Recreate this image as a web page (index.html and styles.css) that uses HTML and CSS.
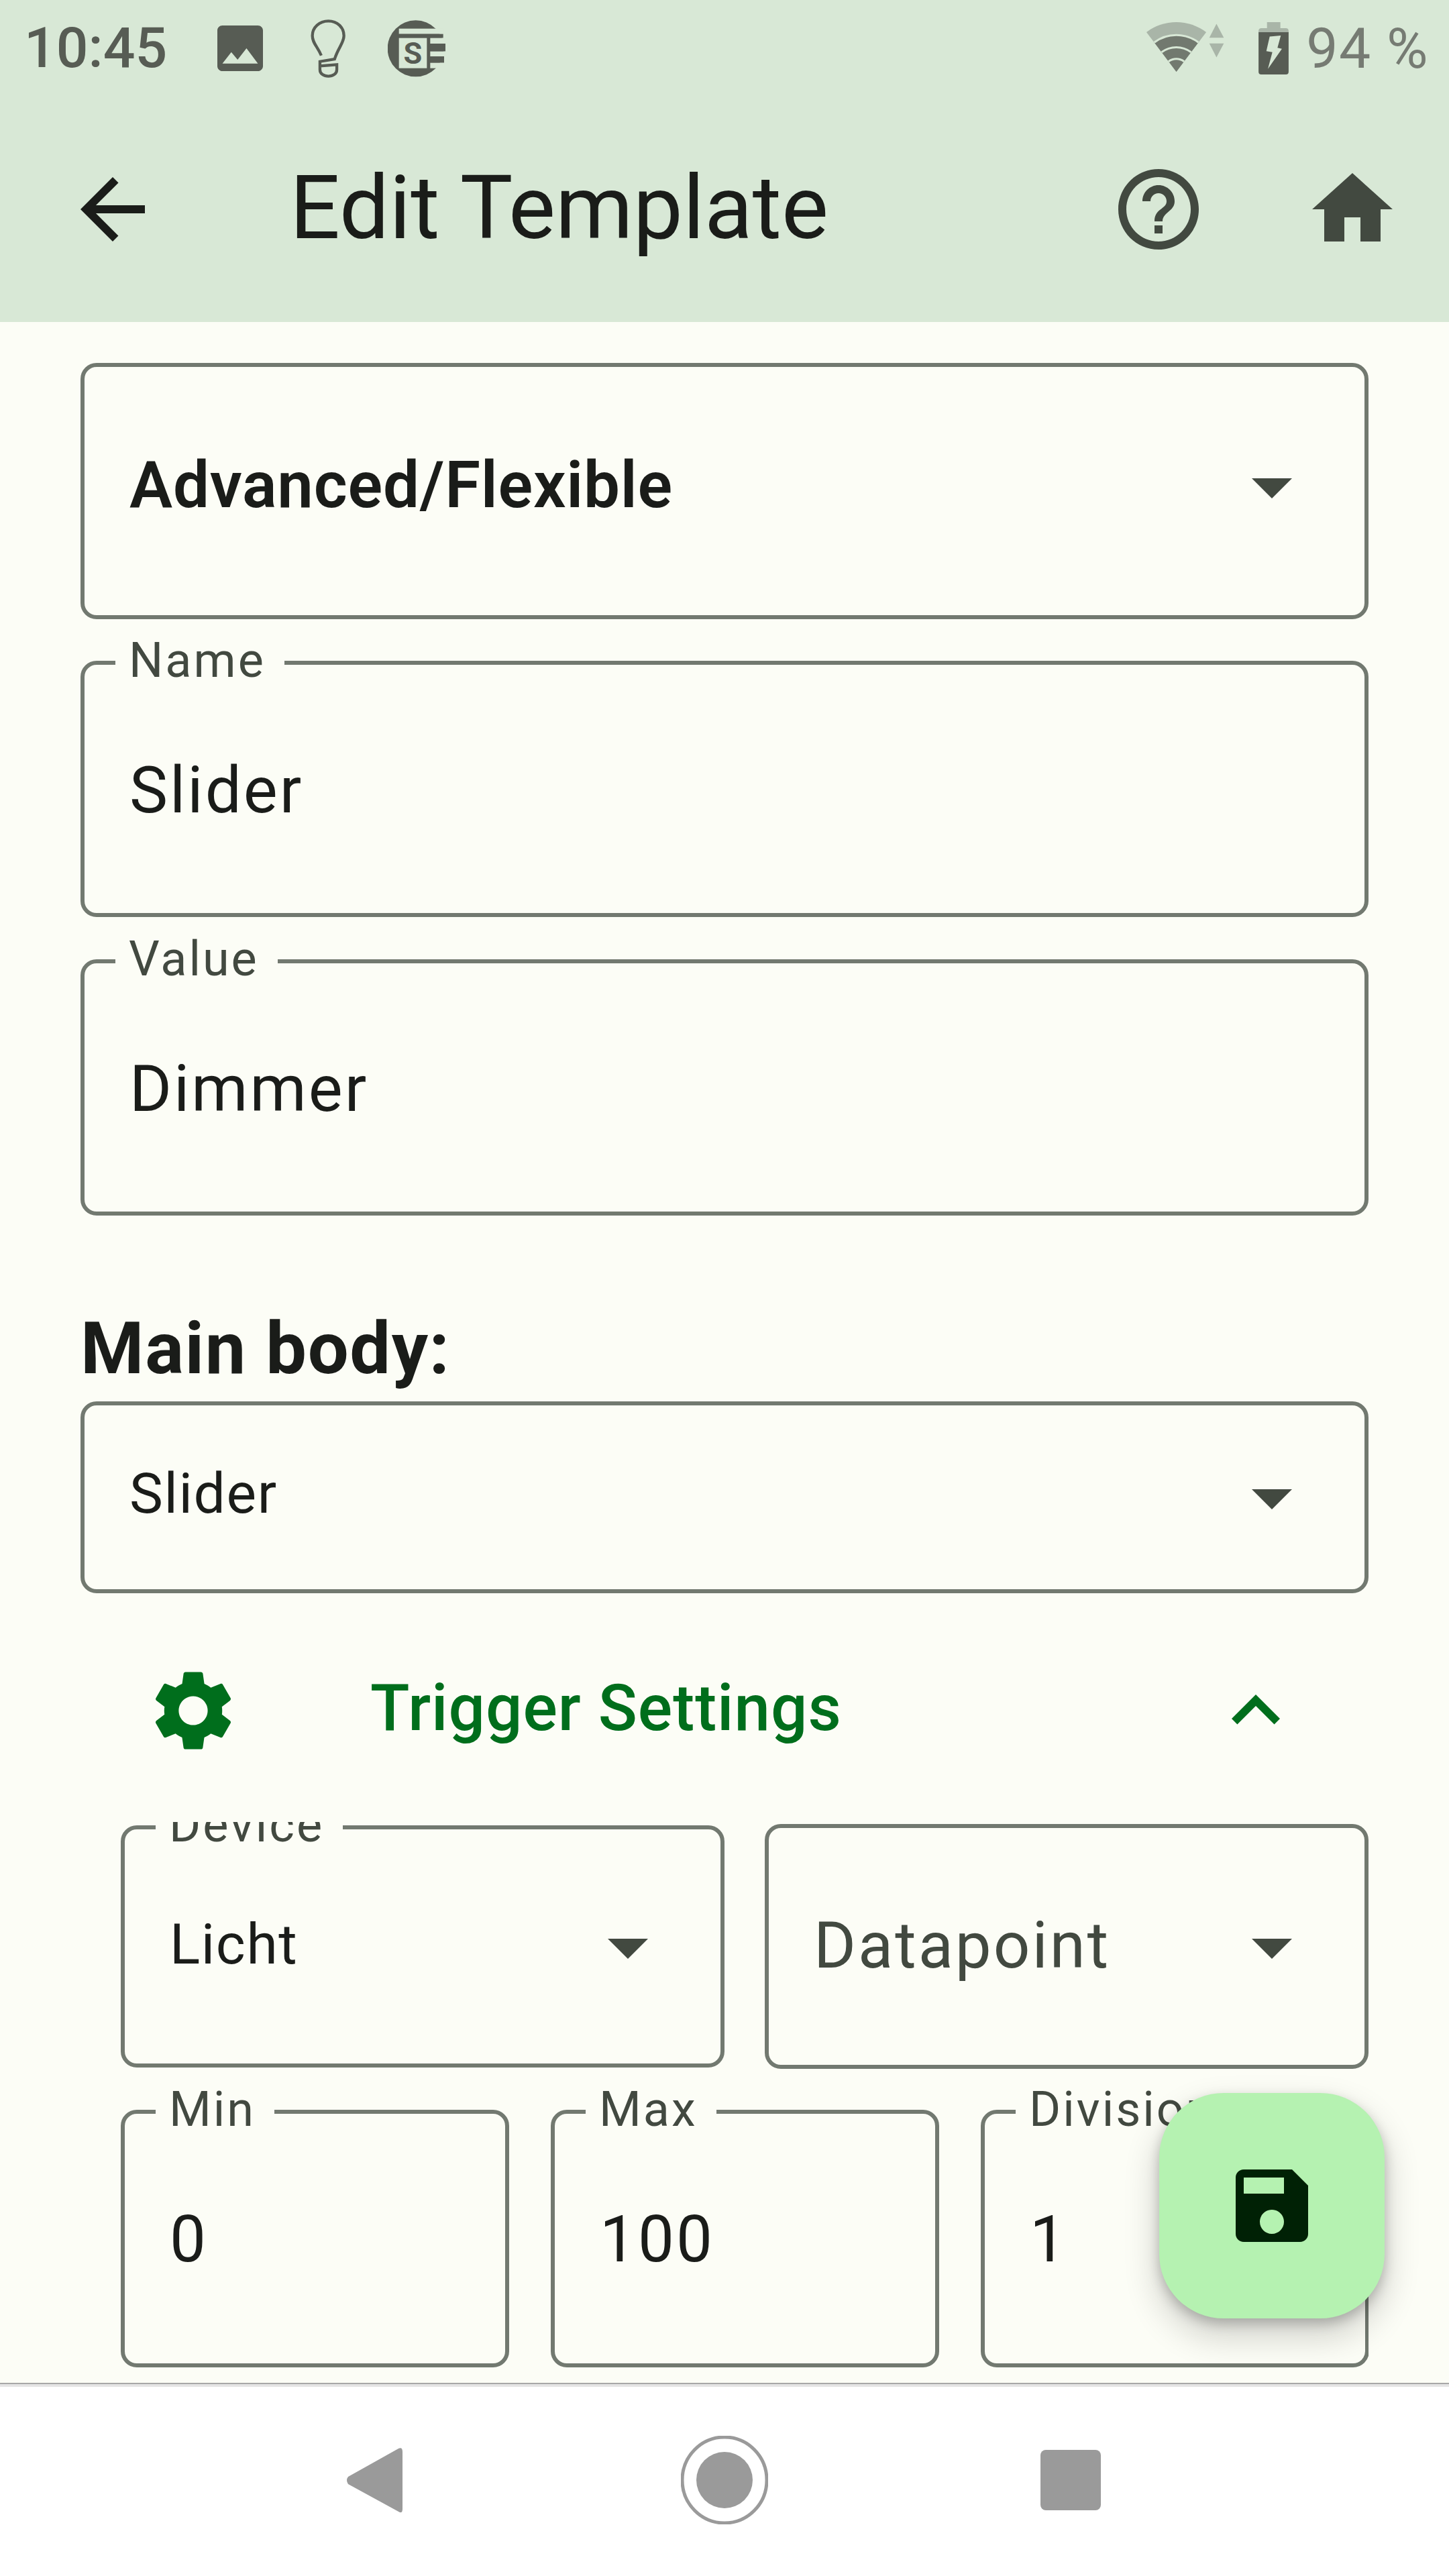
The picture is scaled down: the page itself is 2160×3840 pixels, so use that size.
FILE: index.html
```html
<!DOCTYPE html>
<html lang="en">
<head>
<meta charset="utf-8">
<title>Edit Template</title>
<link rel="stylesheet" href="styles.css">
</head>
<body>
<div class="screen">
  <header class="top">
    <div class="status">
      <span class="time">10:45</span>
      <svg class="st-image" viewBox="3 3 18 18"><path fill="#575c54" d="M21 19V5c0-1.1-.9-2-2-2H5c-1.1 0-2 .9-2 2v14c0 1.1.9 2 2 2h14c1.1 0 2-.9 2-2zM8.5 13.5l2.5 3.01L14.5 12l4.5 6H5l3.5-4.5z"/></svg>
      <svg class="st-bulb" viewBox="70 25 160 262"><path fill="none" stroke="#575c54" stroke-width="13" d="M118 187C100 145 78 130 78 98C78 60 110 32 150 32C190 32 220 60 220 98C220 130 195 150 178 203L112 214V250C112 270 130 280 150 280C170 280 188 270 188 250V228L112 234"/></svg>
      <svg class="st-sf" viewBox="420 28 258 259">
        <circle cx="545" cy="157" r="126" fill="#575c54"/>
        <rect x="470" y="68" width="200" height="24" fill="#d8e8d6"/>
        <rect x="470" y="92" width="198" height="18" fill="#575c54"/>
        <rect x="470" y="110" width="125" height="135" fill="#d8e8d6"/>
        <rect x="610" y="110" width="68" height="25" fill="#d8e8d6"/>
        <rect x="610" y="135" width="68" height="35" fill="#575c54"/>
        <rect x="610" y="170" width="68" height="22" fill="#d8e8d6"/>
        <rect x="610" y="192" width="62" height="29" fill="#575c54"/>
        <rect x="610" y="221" width="68" height="24" fill="#d8e8d6"/>
        <text x="532" y="226" class="sf-letter">S</text>
      </svg>
      <svg class="st-wifi" viewBox="45 40 355 230">
        <path fill="#a9b5a8" d="M182 265L48 87A223 223 0 0 1 316 87Z"/>
        <path fill="#72796f" d="M182 265L83 133A165 165 0 0 1 281 133Z"/>
        <path fill="none" stroke="#d8e8d6" stroke-width="9" d="M83 133A165 165 0 0 1 281 133M116 177A110 110 0 0 1 248 177M147 219A58 58 0 0 1 217 219"/>
        <path fill="#a9b5a8" d="M362 50L330 112H395ZM330 138H395L362 200Z"/>
      </svg>
      <svg class="st-batt" viewBox="550 35 135 235">
        <path fill="#a9b5a8" d="M588 35H648V62H672Q685 62 685 75V85H550V75Q550 62 563 62H588Z"/>
        <path fill="#575c54" d="M550 80H685V258Q685 270 673 270H562Q550 270 550 258Z"/>
        <path fill="#d8e8d6" d="M600 100L650 95L635 150L655 155L592 245L612 170L585 165Z"/>
      </svg>
      <span class="pct">94 %</span>
    </div>
    <div class="appbar">
      <svg class="icon" viewBox="0 0 24 24"><path fill="#1a1c19" d="M20 11H7.83l5.59-5.59L12 4l-8 8 8 8 1.41-1.41L7.83 13H20v-2z"/></svg>
      <h1 class="title">Edit Template</h1>
      <svg class="icon" viewBox="0 0 24 24"><path fill="#424940" d="M11 18h2v-2h-2v2zm1-16C6.48 2 2 6.48 2 12s4.48 10 10 10 10-4.48 10-10S17.52 2 12 2zm0 18c-4.41 0-8-3.59-8-8s3.59-8 8-8 8 3.59 8 8-3.59 8-8 8zm0-14c-2.21 0-4 1.79-4 4h2c0-1.1.9-2 2-2s2 .9 2 2c0 2-3 1.75-3 5h2c0-2.25 3-2.5 3-5 0-2.21-1.79-4-4-4z"/></svg>
      <svg class="icon home" viewBox="0 0 24 24"><path fill="#424940" d="M10 20v-6h4v6h5v-8h3L12 3 2 12h3v8z"/></svg>
    </div>
  </header>

  <main class="content">
    <div class="field type-field">
      <span class="value strong">Advanced/Flexible</span>
      <svg class="icon drop" viewBox="0 0 24 24"><path fill="#424940" d="M7 10l5 5 5-5z"/></svg>
    </div>
    <div class="field text-field name-field">
      <span class="label">Name</span>
      <span class="value">Slider</span>
    </div>
    <div class="field text-field value-field">
      <span class="label">Value</span>
      <span class="value">Dimmer</span>
    </div>
    <h2 class="heading">Main body:</h2>
    <div class="field body-field">
      <span class="value small">Slider</span>
      <svg class="icon drop" viewBox="0 0 24 24"><path fill="#424940" d="M7 10l5 5 5-5z"/></svg>
    </div>
    <div class="expander">
      <svg class="icon gear" viewBox="0 0 24 24"><path fill="#006e1c" d="M19.14 12.94c.04-.3.06-.61.06-.94 0-.32-.02-.64-.07-.94l2.03-1.58c.18-.14.23-.41.12-.61l-1.92-3.32c-.12-.22-.37-.29-.59-.22l-2.39.96c-.5-.38-1.03-.7-1.62-.94l-.36-2.54c-.04-.24-.24-.41-.48-.41h-3.84c-.24 0-.43.17-.47.41l-.36 2.54c-.59.24-1.13.57-1.62.94l-2.39-.96c-.22-.08-.47 0-.59.22L2.74 8.87c-.12.21-.08.47.12.61l2.03 1.58c-.05.3-.09.63-.09.94s.02.64.07.94l-2.03 1.58c-.18.14-.23.41-.12.61l1.92 3.32c.12.22.37.29.59.22l2.39-.96c.5.38 1.03.7 1.62.94l.36 2.54c.05.24.24.41.48.41h3.84c.24 0 .44-.17.47-.41l.36-2.54c.59-.24 1.13-.56 1.62-.94l2.39.96c.22.08.47 0 .59-.22l1.92-3.32c.12-.22.07-.47-.12-.61l-2.01-1.58zM12 15.6c-1.98 0-3.6-1.62-3.6-3.6s1.62-3.6 3.6-3.6 3.6 1.62 3.6 3.6-1.62 3.6-3.6 3.6z"/></svg>
      <span class="exp-title">Trigger Settings</span>
      <svg class="icon chevron" viewBox="0 0 24 24"><path fill="#006e1c" d="M12 8l-6 6 1.41 1.41L12 10.83l4.59 4.58L18 14z"/></svg>
    </div>
    <section class="panel">
      <div class="row-two">
        <div class="field device-field">
          <span class="label">Device</span>
          <span class="value small">Licht</span>
          <svg class="icon drop" viewBox="0 0 24 24"><path fill="#424940" d="M7 10l5 5 5-5z"/></svg>
        </div>
        <div class="field datapoint-field">
          <span class="value hint">Datapoint</span>
          <svg class="icon drop" viewBox="0 0 24 24"><path fill="#424940" d="M7 10l5 5 5-5z"/></svg>
        </div>
      </div>
      <div class="row-three">
        <div class="field num-field">
          <span class="label">Min</span>
          <span class="value">0</span>
        </div>
        <div class="field num-field">
          <span class="label">Max</span>
          <span class="value">100</span>
        </div>
        <div class="field num-field">
          <span class="label">Divisions</span>
          <span class="value">1</span>
        </div>
      </div>
    </section>
  </main>

  <button class="fab" type="button" aria-label="Save">
    <svg class="icon" viewBox="0 0 24 24"><path fill="#002105" d="M17 3H5c-1.11 0-2 .9-2 2v14c0 1.1.89 2 2 2h14c1.1 0 2-.9 2-2V7l-4-4zm-5 16c-1.66 0-3-1.34-3-3s1.34-3 3-3 3 1.34 3 3-1.34 3-3 3zm3-10H5V5h10v4z"/></svg>
  </button>

  <nav class="navbar">
    <svg class="nav-back" viewBox="0 0 84 97"><path fill="#9a9a9a" d="M78 1Q84-2 84 6V91Q84 99 78 95L3 54Q-1 48 3 43Z"/></svg>
    <svg class="nav-home" viewBox="0 0 130 132"><ellipse cx="65" cy="66" rx="63" ry="64" fill="none" stroke="#9a9a9a" stroke-width="5"/><circle cx="65" cy="66" r="42" fill="#9a9a9a"/></svg>
    <span class="nav-recent"></span>
  </nav>
</div>
</body>
</html>
```
FILE: styles.css
```css
* { box-sizing: border-box; }
html, body { margin: 0; padding: 0; }
body { font-family: Roboto, "Liberation Sans", sans-serif; color: #1a1c19; background: #fcfdf6; }
.screen { position: relative; width: 2160px; height: 3840px; display: flex; flex-direction: column; overflow: hidden; background: #fcfdf6; }
.icon { width: 144px; height: 144px; flex: none; display: block; }

.top { height: 480px; flex: none; background: #d8e8d6; }
.status { height: 144px; display: flex; align-items: center; padding: 0 30px 0 36px; color: #575c54; }
.time { font-size: 84px; font-weight: 500; line-height: 150px; width: 288px; flex: none; }
.st-image { width: 68px; height: 68px; flex: none; }
.st-bulb { width: 53px; height: 87px; flex: none; margin-left: 71px; }
.st-sf { width: 86px; height: 87px; flex: none; margin-left: 62px; }
.sf-letter { font: 700 135px Roboto, sans-serif; fill: #575c54; text-anchor: middle; }
.st-wifi { width: 118px; height: 77px; flex: none; margin-left: auto; margin-top: -3px; }
.st-batt { width: 45px; height: 78px; flex: none; margin-left: 50px; }
.pct { font-size: 84px; line-height: 153px; margin-left: 26px; color: #767b73; letter-spacing: 1.5px; }

.appbar { height: 336px; display: flex; align-items: center; padding: 0 72px 0 96px; }
.title { margin: 0 0 4px 192px; flex: 1; font-size: 132px; font-weight: 400; line-height: 176px; color: #1a1c19; }
.home { margin-left: 145px; }

.content { flex: 1; min-height: 0; overflow: hidden; padding: 61px 120px 0; display: flex; flex-direction: column; }
.field { position: relative; display: flex; align-items: center; flex: none; padding: 0 66px 0 67px; border: 6px solid #727970; border-radius: 24px; }
.label { position: absolute; left: 46px; top: -42px; padding: 0 28px 0 20px; background: #fcfdf6; font-size: 72px; line-height: 72px; letter-spacing: 3px; color: #424940; white-space: nowrap; }
.value { font-size: 96px; line-height: 112px; letter-spacing: 3px; color: #1a1c19; }
.text-field .value { margin-top: 4px; }
.strong { font-weight: 600; letter-spacing: 0.8px; }
.small { font-size: 84px; letter-spacing: 1.6px; margin-top: -6px; }
.body-field .small { margin-top: -10px; }
.hint { color: #424940; letter-spacing: 3px; margin-top: -4px; }
.drop { margin-left: auto; margin-right: 0; }
.type-field .drop { margin-top: 4px; }
.num-field .value { margin-top: 2px; }

.type-field { height: 382px; padding-bottom: 18px; }
.text-field { height: 382px; }
.name-field { margin-top: 62px; }
.value-field { margin-top: 63px; }
.heading { margin: 128px 0 9px; font-size: 108px; line-height: 140px; font-weight: 700; letter-spacing: 1.6px; }
.body-field { height: 286px; }

.expander { height: 341px; flex: none; display: flex; align-items: center; padding: 31px 96px 23px; margin: 0; }
.exp-title { margin: -8px 0 0 192px; flex: 1; font-size: 96px; font-weight: 500; line-height: 112px; letter-spacing: 1px; color: #006e1c; }

.panel { flex: none; overflow: hidden; padding: 3px 0 0 60px; display: flex; flex-direction: column; }
.row-two { display: grid; grid-template-columns: 900px 900px; column-gap: 60px; align-items: start; }
.device-field { margin-top: 2px; height: 361px; }
.datapoint-field { height: 365px; }
.row-three { display: grid; grid-template-columns: repeat(3, 579px); column-gap: 62px; margin-top: 61px; }
.num-field { height: 384px; }

.fab { position: absolute; right: 96px; bottom: 384px; width: 336px; height: 336px; padding: 0; display: flex; align-items: center; justify-content: center; border: 0; border-radius: 96px; background: #b5f2b1; box-shadow: 0 24px 48px 6px rgba(0,0,0,.16), 0 8px 18px rgba(0,0,0,.22); }

.navbar { height: 288px; flex: none; display: flex; align-items: center; padding-left: 516px; background: #fff; border-top: 2px solid #a8a8a8; box-shadow: inset 0 4px 0 #e4e4e4; }
.nav-back { width: 84px; height: 97px; flex: none; }
.nav-home { width: 130px; height: 132px; flex: none; margin-left: 415px; }
.nav-recent { width: 90px; height: 90px; flex: none; margin-left: 406px; border-radius: 8px; background: #9a9a9a; }
```
